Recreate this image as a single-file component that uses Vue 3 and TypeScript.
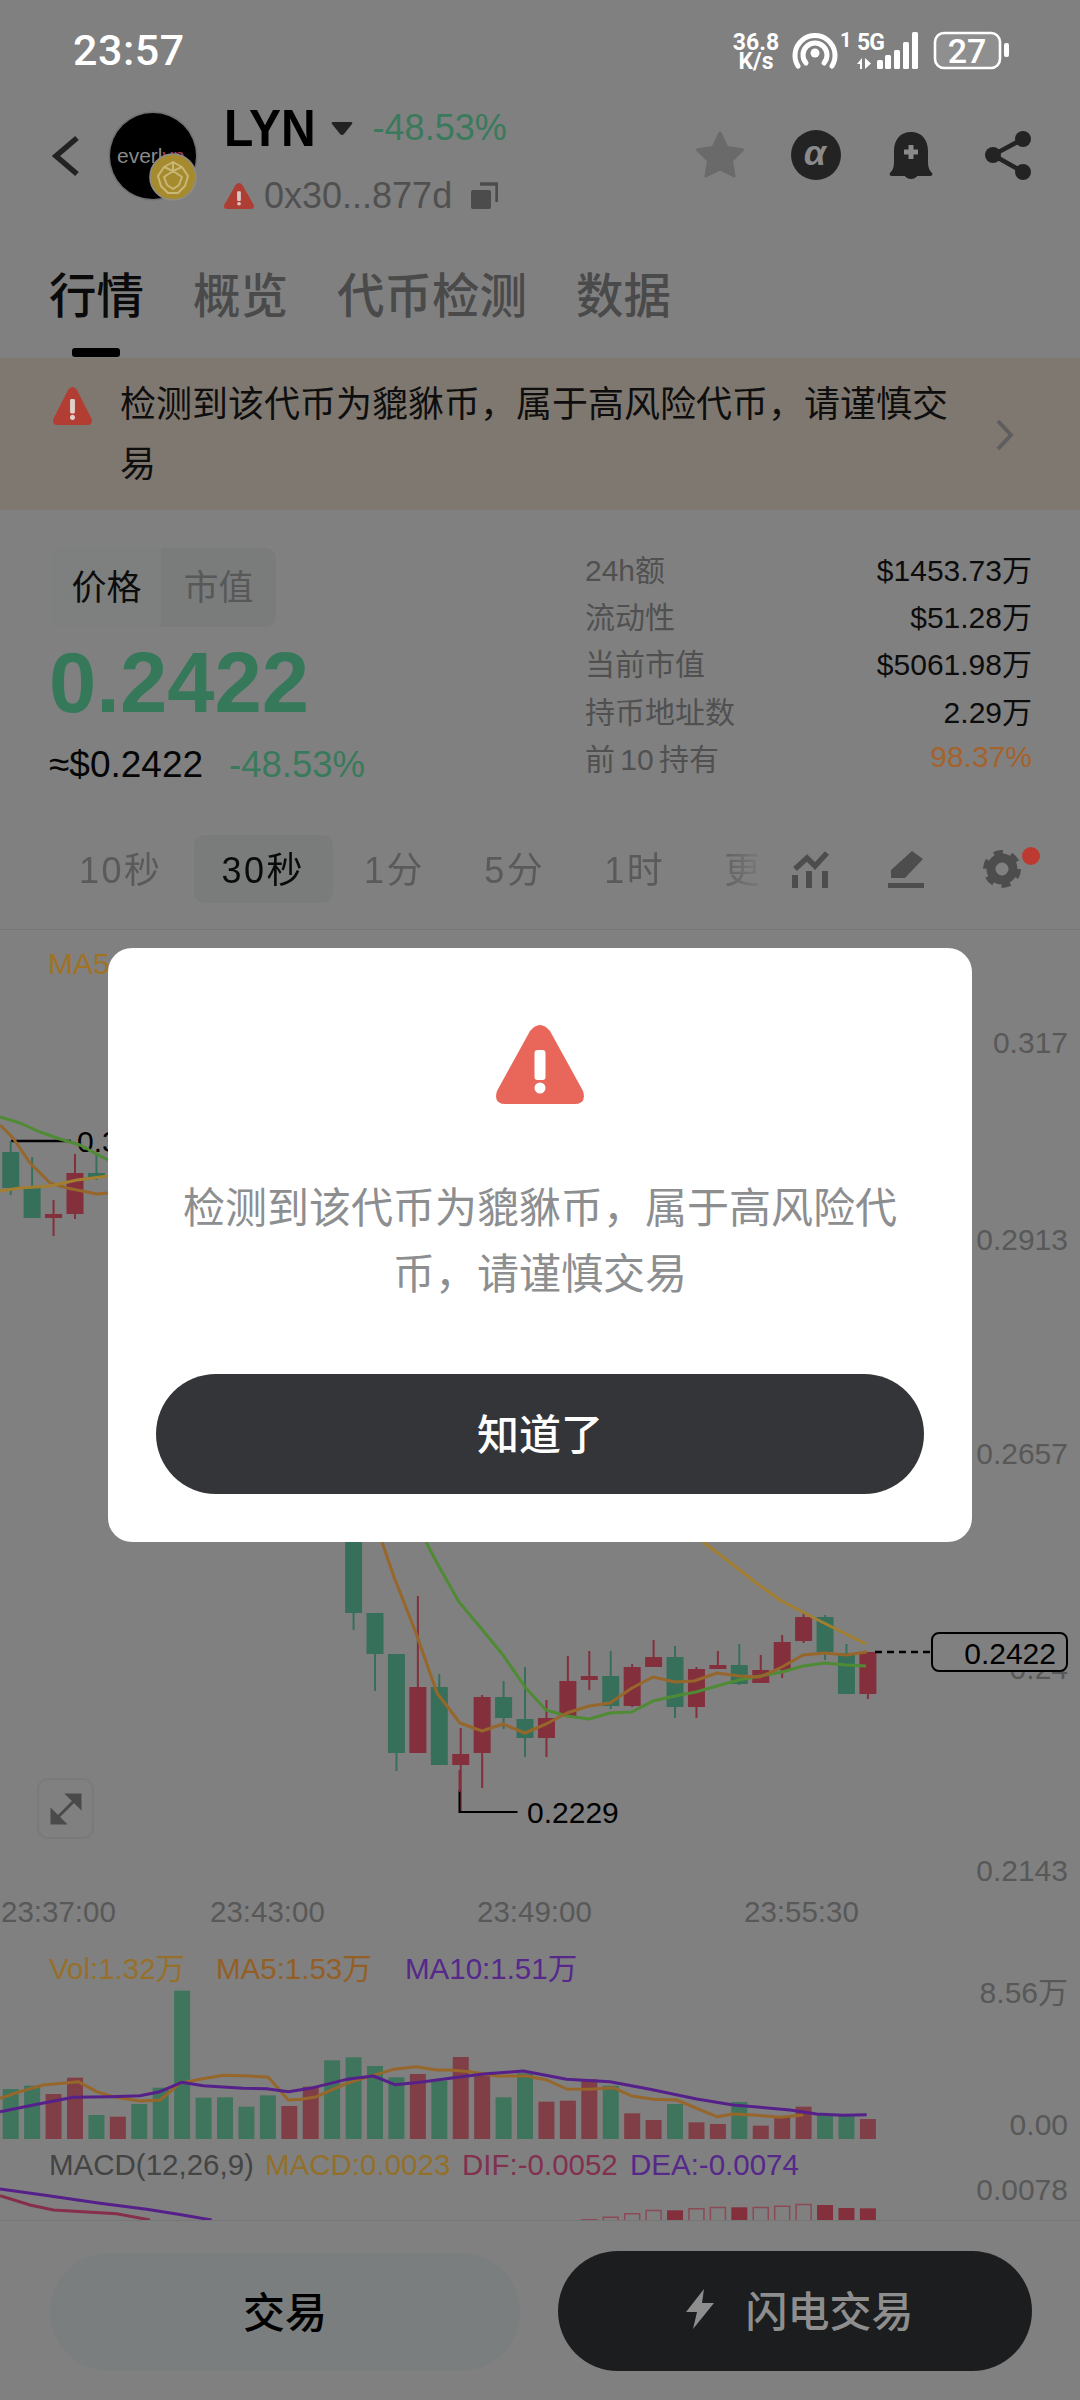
<script setup lang="ts">
type Candle = [number, 'g' | 'r', number, number, number, number]

const barX = (i: number) => 10.7 + 21.43 * i

const candles: Candle[] = [
  [0, 'g', 1152, 1188, 1141, 1195],
  [1, 'g', 1188, 1218, 1157, 1218],
  [2, 'r', 1214, 1218, 1200, 1236],
  [3, 'r', 1173, 1214, 1154, 1219],
  [4, 'g', 1173, 1177, 1155, 1180],
  [16, 'g', 1500, 1613, 1500, 1630],
  [17, 'g', 1613, 1654, 1613, 1691],
  [18, 'g', 1654, 1753, 1654, 1771],
  [19, 'r', 1687, 1753, 1596, 1753],
  [20, 'g', 1687, 1765, 1674, 1765],
  [21, 'r', 1754, 1765, 1728, 1813],
  [22, 'r', 1697, 1753, 1695, 1788],
  [23, 'g', 1697, 1718, 1681, 1729],
  [24, 'g', 1719, 1738, 1667, 1757],
  [25, 'r', 1718, 1738, 1700, 1757],
  [26, 'r', 1681, 1716, 1656, 1716],
  [27, 'r', 1676, 1680, 1651, 1690],
  [28, 'g', 1676, 1706, 1651, 1709],
  [29, 'r', 1667, 1706, 1664, 1707],
  [30, 'r', 1657, 1667, 1640, 1667],
  [31, 'g', 1657, 1707, 1646, 1718],
  [32, 'r', 1669, 1707, 1667, 1718],
  [33, 'r', 1665, 1669, 1651, 1669],
  [34, 'g', 1665, 1684, 1644, 1685],
  [35, 'r', 1670, 1683, 1655, 1683],
  [36, 'r', 1642, 1670, 1635, 1678],
  [37, 'r', 1617, 1641, 1613, 1643],
  [38, 'g', 1617, 1652, 1615, 1660],
  [39, 'g', 1653, 1694, 1644, 1694],
  [40, 'r', 1652, 1694, 1652, 1699],
]

const poly = (p: number[][]) => p.map((q) => q.join(',')).join(' ')
const scaled = (p: number[][], ox: number) =>
  p.map(([x, y]) => `${ox + x / 3},${1990 + y / 3}`).join(' ')

const maLines = [
  { c: '#4f8a34', w: 3, p: [[0, 1117], [20, 1123], [40, 1132], [60, 1139], [80, 1145], [108, 1160], [130, 1170]] },
  { c: '#96662a', w: 3, p: [[0, 1125], [13, 1138], [30, 1163], [50, 1183], [67, 1188], [97, 1194], [120, 1192]] },
  { c: '#a27e30', w: 3, p: [[0, 1191], [20, 1188], [50, 1186], [77, 1180], [108, 1176], [130, 1170]] },
  { c: '#a27e30', w: 3, p: [[703, 1542], [723, 1557], [755, 1582], [780, 1600], [812, 1617], [844, 1633], [866, 1644]] },
  { c: '#4f8a34', w: 3, p: [[426, 1542], [437, 1563], [459, 1602], [480, 1627], [503, 1655], [525, 1687], [546, 1710], [567, 1716], [589, 1719], [610, 1713], [632, 1712], [653, 1701], [675, 1696], [696, 1692], [717, 1686], [739, 1680], [760, 1676], [782, 1672], [803, 1666], [825, 1663], [846, 1665], [866, 1666]] },
  { c: '#96662a', w: 3, p: [[382, 1542], [394, 1577], [416, 1633], [437, 1693], [460, 1723], [482, 1731], [503, 1724], [525, 1733], [546, 1724], [567, 1713], [589, 1706], [610, 1703], [632, 1688], [653, 1677], [675, 1682], [694, 1681], [717, 1673], [739, 1676], [760, 1677], [782, 1667], [803, 1655], [825, 1653], [846, 1655], [867, 1652]] },
]

const volTops: [string, number][] = [
  ['g', 297], ['g', 287], ['r', 312], ['r', 263], ['g', 375], ['r', 380], ['g', 342], ['g', 293], ['g', 2], ['g', 323],
  ['g', 322], ['g', 350], ['g', 316], ['r', 348], ['r', 290], ['g', 211], ['g', 202], ['g', 228], ['g', 262], ['r', 252],
  ['g', 272], ['r', 201], ['r', 255], ['g', 322], ['g', 250], ['r', 335], ['r', 332], ['r', 268], ['g', 287], ['r', 370],
  ['r', 390], ['g', 342], ['r', 397], ['r', 402], ['g', 336], ['r', 407], ['r', 378], ['r', 350], ['g', 375], ['g', 375],
  ['r', 387],
]
const volY = (z: number) => 1990 + z / 3

const volOrange =
  scaled([[0, 325], [60, 305], [130, 285], [235, 275], [290, 305], [340, 320], [420, 333], [480, 330], [540, 280], [600, 268], [670, 256], [750, 258], [805, 262], [865, 330], [905, 328], [950, 320], [1040, 280], [1100, 262], [1180, 238], [1250, 230], [1310, 240], [1350, 240]], 0) +
  ' ' +
  scaled([[60, 245], [140, 258], [230, 258], [290, 270], [350, 297], [420, 298], [490, 293], [545, 318], [610, 328], [680, 330], [800, 380], [850, 372], [920, 376], [990, 382], [1060, 375]], 450)

const volPurple =
  scaled([[0, 365], [100, 345], [220, 322], [330, 320], [420, 317], [480, 305], [545, 277], [610, 287], [730, 295], [800, 296], [865, 305], [940, 293], [1040, 268], [1120, 258], [1185, 284], [1260, 277], [1350, 265]], 0) +
  ' ' +
  scaled([[100, 252], [220, 243], [350, 268], [480, 275], [600, 298], [740, 327], [850, 345], [930, 352], [1020, 360], [1100, 372], [1180, 376], [1250, 374]], 450)

const macdPurple = scaled([[0, 597], [130, 615], [300, 640], [440, 658], [530, 672], [635, 690]], 0)
const macdRed = scaled([[0, 617], [90, 645], [160, 660], [350, 671], [450, 690]], 0)

const macdBars: [number, number, boolean][] = [
  [27, 688, false], [28, 680, false], [29, 670, false], [30, 660, false], [31, 661, true], [32, 655, false], [33, 651, false],
  [34, 652, true], [35, 651, false], [36, 647, false], [37, 642, false], [38, 645, true], [39, 654, true], [40, 655, true],
]

const axis: [string, number][] = [
  ['0.317', 1053], ['0.2913', 1250], ['0.2657', 1464], ['0.24', 1679], ['0.2143', 1881],
  ['8.56万', 2003], ['0.00', 2135], ['0.0078', 2200],
]
const times: [string, number][] = [['23:37:00', 1], ['23:43:00', 210], ['23:49:00', 477], ['23:55:30', 744]]

const volLabels: [string, number, string, number][] = [
  ['Vol:1.32万', 49, '#96702a', 1979], ['MA5:1.53万', 216, '#935f25', 1979], ['MA10:1.51万', 405, '#55288a', 1979],
  ['MACD(12,26,9)', 49, '#444444', 2175], ['MACD:0.0023', 265, '#93702a', 2175], ['DIF:-0.0052', 462, '#823050', 2175], ['DEA:-0.0074', 630, '#55288a', 2175],
]

const stats = [
  { k: '24h额', v: '$1453.73万' },
  { k: '流动性', v: '$51.28万' },
  { k: '当前市值', v: '$5061.98万' },
  { k: '持币地址数', v: '2.29万' },
  { k: '前 10 持有', v: '98.37%', warn: true },
]
const intervals = ['10秒', '30秒', '1分', '5分', '1时', '更多']
const tabs = ['行情', '概览', '代币检测', '数据']
const signal = [[877, 60], [885, 55], [894, 50], [903, 42], [912, 32]]
const warnShape = 'M34 6Q44-6 54 6L87 66Q91 79 78 79H10Q-3 79 1 66Z'
</script>

<template>
  <div class="page">
    <header class="status">
      <span class="clock">23:57</span>
      <svg class="status-icons" width="280" height="56" viewBox="730 22 280 56">
        <text class="st speed" x="756" y="50" text-anchor="middle">36.8</text>
        <text class="st speed" x="756" y="69" text-anchor="middle">K/s</text>
        <path d="M798 66A20 20 0 1 1 832 66" class="arc" />
        <path d="M806 63A12 12 0 1 1 824 63" class="arc" />
        <circle cx="815" cy="53" r="4.5" fill="#fff" />
        <text class="st one" x="840" y="47">1</text>
        <text class="st fiveg" x="857" y="50">5G</text>
        <path d="M857 64l5-6v11h-2v-5zM865 58v11l6-5.5z" fill="#fff" />
        <rect v-for="s in signal" :key="s[0]" :x="s[0]" :y="s[1]" width="6" :height="69 - s[1]" rx="1.5" fill="#fff" />
        <rect x="935" y="33" width="65" height="35" rx="9" class="batt-fill" />
        <rect x="935" y="33" width="65" height="35" rx="9" fill="none" stroke="#fff" stroke-width="2.6" />
        <rect x="1004" y="43" width="5" height="14" rx="2" fill="#fff" />
        <text class="st batt" x="967" y="63" text-anchor="middle">27</text>
      </svg>
    </header>

    <section class="head">
      <svg class="back" width="28" height="42" viewBox="0 0 28 42">
        <path d="M25 3L4 21l21 18" fill="none" stroke="#222" stroke-width="5.5" />
      </svg>
      <div class="avatar">
        <div class="logo"><span class="logo-text">everl<i>yn</i></span></div>
        <svg class="badge" width="48" height="48" viewBox="0 0 48 48">
          <circle cx="24" cy="24" r="23" fill="#a68a2e" stroke="#8c8c8c" stroke-width="1.6" />
          <path d="M24 9l9 5 6 9-3 10-7 7h-10l-7-7-3-10 6-9zM24 9v9M15 14l9 4 9-4M15 24l9-6 9 6-3 8-6 4-6-4z" fill="none" stroke="#c9b778" stroke-width="2" stroke-linejoin="round" />
        </svg>
      </div>
      <div class="info">
        <div class="info-top">
          <span class="sym">LYN</span>
          <svg width="22" height="15" viewBox="0 0 22 15" class="caret"><path d="M2 1h18q2 0 1 2l-8 10q-2 2-4 0L1 3Q0 1 2 1z" fill="#222" /></svg>
          <span class="chg">-48.53%</span>
        </div>
        <div class="info-addr">
          <svg width="30" height="26" viewBox="0 0 88 79" preserveAspectRatio="none">
            <path :d="warnShape" fill="#ae3d33" />
            <rect x="38.5" y="25" width="11" height="30" rx="3" fill="#d8c8c4" />
            <circle cx="44" cy="63" r="5.5" fill="#d8c8c4" />
          </svg>
          <span class="addr">0x30...877d</span>
          <svg width="28" height="28" viewBox="0 0 28 28">
            <path d="M10 2h17v18" fill="none" stroke="#4c4c4c" stroke-width="3.4" />
            <rect x="1" y="8" width="20" height="19" rx="2" fill="#4c4c4c" />
          </svg>
        </div>
      </div>
      <svg class="actions" width="345" height="60" viewBox="690 125 345 60">
        <path d="M720 133l7 14.5 15.5 2.2-11 11 2.6 15.3-14.1-7.2-14.1 7.2 2.6-15.3-11-11 15.5-2.2z" fill="#6a6a6a" stroke="#6a6a6a" stroke-width="3" stroke-linejoin="round" />
        <circle cx="816" cy="155" r="25" fill="#232323" />
        <text class="alpha" x="815" y="165" text-anchor="middle">α</text>
        <path d="M911 132c-11 0-17 8-17 19v11c0 5-1 8-4 11-1 2 0 3 2 3h38c2 0 3-1 2-3-3-3-4-6-4-11v-11c0-11-6-19-17-19z" fill="#232323" />
        <path d="M903 171a8 8 0 0 0 16 0z" fill="#232323" />
        <path d="M904 152h14M911 145v14" stroke="#8a8a8a" stroke-width="5" />
        <path d="M1023 139l-30 16 30 17" fill="none" stroke="#232323" stroke-width="4.5" />
        <circle cx="1023" cy="139" r="8" fill="#232323" />
        <circle cx="993" cy="155" r="8" fill="#232323" />
        <circle cx="1023" cy="172" r="8" fill="#232323" />
      </svg>
    </section>

    <nav class="tabs">
      <span v-for="(t, i) in tabs" :key="t" class="tab" :class="{ on: i === 0 }">{{ t }}</span>
    </nav>

    <section class="banner">
      <svg class="banner-warn" width="39" height="38" viewBox="0 0 88 79" preserveAspectRatio="none">
        <path :d="warnShape" fill="#b23d33" />
        <rect x="38.5" y="25" width="11" height="30" rx="3" fill="#e0d0cc" />
        <circle cx="44" cy="63" r="5.5" fill="#e0d0cc" />
      </svg>
      <p class="banner-text">检测到该代币为貔貅币，属于高风险代币，请谨慎交易</p>
      <svg class="banner-arrow" width="18" height="32" viewBox="0 0 18 32">
        <path d="M2 2l13 14L2 30" fill="none" stroke="#5e5e5e" stroke-width="4" />
      </svg>
    </section>

    <section class="market">
      <div class="market-left">
        <div class="seg">
          <span class="seg-item seg-on">价格</span>
          <span class="seg-item">市值</span>
        </div>
        <div class="price">0.2422</div>
        <div class="sub"><span class="usd">≈$0.2422</span><span class="chg sub-chg">-48.53%</span></div>
      </div>
      <dl class="stats">
        <div v-for="s in stats" :key="s.k" class="stat">
          <dt>{{ s.k }}</dt>
          <dd :class="{ warn: s.warn }">{{ s.v }}</dd>
        </div>
      </dl>
    </section>

    <section class="periods">
      <div class="period-list">
        <span v-for="(p, i) in intervals" :key="p" class="period" :class="{ on: i === 1 }">{{ p }}</span>
      </div>
      <svg width="280" height="68" viewBox="770 835 280 68">
        <path d="M795 869l12-11 8 8 12-13" fill="none" stroke="#4d4d4d" stroke-width="5.5" />
        <path d="M795 875v13M809 871v17M825 871v17" stroke="#4d4d4d" stroke-width="6" />
        <path d="M912 851l11 8-18 19h-14v-8zM888 883h36v5h-36z" fill="#4d4d4d" />
        <circle cx="1002" cy="869" r="11" fill="none" stroke="#4d4d4d" stroke-width="9" />
        <circle cx="1002" cy="869" r="16.5" fill="none" stroke="#4d4d4d" stroke-width="5" stroke-dasharray="9 8.28" />
        <circle cx="1031" cy="856" r="9" fill="#bd3a30" />
      </svg>
    </section>

    <svg class="chart" width="1080" height="1291" viewBox="0 929 1080 1291">
      <text class="ct" x="48" y="974" fill="#a07225">MA5:0.2437</text>
      <path d="M11 1141h60" stroke="#000" stroke-width="2.5" />
      <text class="ct" x="77" y="1152" fill="#000">0.3361</text>

      <text v-for="a in axis" :key="a[0]" class="ct" x="1068" :y="a[1]" text-anchor="end" fill="#585858">{{ a[0] }}</text>
      <text v-for="t in times" :key="t[0]" class="ct time" :x="t[1]" y="1922" fill="#585858">{{ t[0] }}</text>

      <g v-for="c in candles" :key="c[0]" :fill="c[1] === 'g' ? '#37705a' : '#842f3c'">
        <rect :x="barX(c[0]) - 1" :y="c[4]" width="2" :height="c[5] - c[4]" />
        <rect :x="barX(c[0]) - 8.5" :y="c[2]" width="17" :height="c[3] - c[2]" />
      </g>
      <polyline v-for="(l, i) in maLines" :key="i" :points="poly(l.p)" fill="none" :stroke="l.c" :stroke-width="l.w" stroke-linejoin="round" />

      <path d="M459.5 1790v22h58" fill="none" stroke="#000" stroke-width="2" />
      <path d="M459.5 1770v22" stroke="#842f3c" stroke-width="2" />
      <text class="ct" x="527" y="1823" fill="#000">0.2229</text>

      <path d="M875 1652h55" stroke="#000" stroke-width="2.5" stroke-dasharray="7 5" />
      <rect x="932" y="1633" width="135" height="38" rx="7" fill="#808080" stroke="#000" stroke-width="2" />
      <text class="ct" x="1056" y="1664" text-anchor="end" fill="#000">0.2422</text>

      <rect x="38" y="1779" width="55" height="59" rx="10" fill="none" stroke="#7a7a7a" stroke-width="2" />
      <path d="M68 1795h12v12zM52 1811v12h12zM58 1817l16-16" fill="#4a4a4a" stroke="#4a4a4a" stroke-width="3" />

      <text v-for="v in volLabels" :key="v[0]" class="ct small" :x="v[1]" :y="v[3]" :fill="v[2]">{{ v[0] }}</text>

      <rect v-for="(b, i) in volTops" :key="i" :x="barX(i) - 8" :y="volY(b[1])" width="16" :height="2139 - volY(b[1])" :fill="b[0] === 'g' ? '#3f755c' : '#803f46'" />
      <polyline :points="volOrange" fill="none" stroke="#96662a" stroke-width="3" stroke-linejoin="round" />
      <polyline :points="volPurple" fill="none" stroke="#55208a" stroke-width="3" stroke-linejoin="round" />

      <polyline :points="macdRed" fill="none" stroke="#862f4a" stroke-width="3" />
      <polyline :points="macdPurple" fill="none" stroke="#55208a" stroke-width="3" />
      <template v-for="m in macdBars" :key="m[0]">
        <rect v-if="m[2]" :x="barX(m[0]) - 8" :y="volY(m[1])" width="16" :height="2220 - volY(m[1])" fill="#842f3c" />
        <path v-else :d="`M${barX(m[0]) - 7.5} 2220V${volY(m[1]) + 0.5}H${barX(m[0]) + 7.5}V2220`" fill="none" stroke="#8c4a54" stroke-width="1.5" />
      </template>
    </svg>

    <footer class="foot">
      <button class="btn btn-plain">交易</button>
      <button class="btn btn-dark">
        <svg width="30" height="40" viewBox="0 0 30 40"><path d="M19 0L1 23h11L8 40l21-26H17z" fill="#8e8e8e" /></svg>
        <span>闪电交易</span>
      </button>
    </footer>

    <div class="dialog-layer">
      <div class="dialog">
        <svg width="88" height="79" viewBox="0 0 88 79">
          <path :d="warnShape" fill="#e8675a" />
          <rect x="38.5" y="25" width="11" height="30" rx="3" fill="#fff" />
          <circle cx="44" cy="63" r="5.5" fill="#fff" />
        </svg>
        <p class="dialog-text">检测到该代币为貔貅币，属于高风险代币，请谨慎交易</p>
        <button class="dialog-btn">知道了</button>
      </div>
    </div>
  </div>
</template>

<style>
html, body { margin: 0; background: #808080; }
</style>

<style scoped>
.page {
  position: relative;
  width: 1080px;
  height: 2400px;
  overflow: hidden;
  background: #808080;
  color: #000;
  font-family: "Liberation Sans", "Noto Sans CJK SC", sans-serif;
}
svg { display: block; flex: none; }

.status {
  height: 100px;
  display: flex;
  justify-content: space-between;
  align-items: center;
  padding: 0 70px 0 73px;
}
.clock { font: 500 43px Roboto, sans-serif; color: #fff; letter-spacing: 0.5px; }
.st { fill: #fff; font-family: Roboto, sans-serif; font-weight: 700; }
.speed { font-size: 23px; }
.one { font-size: 20px; }
.fiveg { font-size: 23px; letter-spacing: -1px; }
.batt { font-size: 34px; font-weight: 500; }
.batt-fill { fill: rgba(255,255,255,.12); }
.arc { fill: none; stroke: #fff; stroke-width: 5px; stroke-linecap: round; }

.head { height: 122px; display: flex; align-items: flex-start; padding-left: 52px; position: relative; }
.back { margin-top: 35px; }
.avatar { position: relative; width: 90px; height: 90px; margin: 11px 0 0 28px; }
.logo {
  width: 86px; height: 86px; margin: 2px;
  border-radius: 50%;
  background: #000;
  box-shadow: 0 0 0 1.5px #707070;
  overflow: hidden;
  display: flex; align-items: center;
}
.logo-text { font-size: 21px; color: #8a8a8a; padding-left: 7px; white-space: nowrap; }
.logo-text i { font-style: normal; color: #a0405a; }
.badge { position: absolute; left: 41px; top: 42px; }
.info { margin-left: 26px; }
.info-top { height: 56px; display: flex; align-items: center; }
.sym { display: inline-block; font-size: 48px; font-weight: 700; line-height: 56px; margin-top: 2px; transform: scaleY(1.07); }
.caret { margin: 0 20px 0 15px; }
.chg { color: #3a7a5c; font-size: 36px; letter-spacing: 0; }
.info-addr { margin-top: 14px; height: 52px; display: flex; align-items: center; }
.addr { font-size: 36px; color: #505050; margin: 0 18px 0 10px; }
.actions { position: absolute; left: 690px; top: 25px; }

.tabs { height: 136px; box-sizing: border-box; padding: 51px 0 0 49px; display: flex; gap: 49px; position: relative; }
.tab { position: relative; height: 48px; line-height: 48px; font-size: 47.5px; font-weight: 500; color: #4a4a4a; }
.tab.on { color: #0a0a0a; }
.tab.on::after {
  content: "";
  position: absolute;
  left: 23px; top: 75px;
  width: 48px; height: 9px;
  border-radius: 3px;
  background: #000;
}

.banner {
  height: 152px;
  box-sizing: border-box;
  background: #7f7870;
  padding: 17px 0 0 53px;
  display: flex;
  align-items: flex-start;
}
.banner-warn { margin-top: 12px; }
.banner-text { margin: 0 0 0 28px; width: 850px; font-size: 36px; line-height: 60px; color: #0e0e0e; }
.banner-arrow { margin: 44px 0 0 26px; }

.market { height: 315px; box-sizing: border-box; padding: 34px 48px 0 49px; display: flex; justify-content: space-between; }
.seg { display: flex; width: 224px; height: 79px; margin: 4px 0 0 3px; border-radius: 10px; overflow: hidden; background: #7a7c7c; }
.seg-item { flex: 1; text-align: center; line-height: 79px; font-size: 35px; color: #585858; }
.seg-on { flex: 0 0 109px; background: #7e7f7f; color: #0c0c0c; }
.price { font-size: 85px; font-weight: 700; line-height: 84px; color: #35785a; margin-top: 14px; }
.sub { margin-top: 18px; line-height: 44px; display: flex; gap: 26px; font-size: 37px; }
.usd { color: #050505; }
.sub-chg { font-size: 36.5px; }
.stats { margin: 0; width: 447px; }
.stat { height: 47.3px; display: flex; justify-content: space-between; align-items: center; font-size: 30px; }
.stat dt { color: #505050; word-spacing: -3px; }
.stat dd { margin: 0; color: #0c0c0c; }
.stat dd.warn { color: #a5622c; }

.periods { height: 104px; box-sizing: border-box; padding: 10px 0 0 51px; display: flex; align-items: flex-start; }
.period-list {
  width: 719px;
  display: flex;
  gap: 3px;
  overflow: hidden;
  -webkit-mask-image: linear-gradient(90deg, #000 92%, transparent 100%);
  mask-image: linear-gradient(90deg, #000 92%, transparent 100%);
}
.period { flex: none; height: 68px; line-height: 72px; padding: 0 28px; border-radius: 10px; font-size: 36px; color: #5a5a5a; letter-spacing: 2.5px; }
.period.on { background: #7a7c7c; color: #0a0a0a; }

.chart { background: linear-gradient(#777 1px, transparent 1px); }
.ct { font-size: 30px; font-family: "Liberation Sans", "Noto Sans CJK SC", sans-serif; }
.time { font-size: 29.5px; }
.small { font-size: 29.5px; }
.alpha { fill: #8a8a8a; font: italic 700 36px "Liberation Sans", sans-serif; }

.foot {
  height: 180px;
  box-sizing: border-box;
  border-top: 1.5px solid #767676;
  padding: 30px 48px 0 50px;
  display: flex;
  align-items: flex-start;
  gap: 38px;
}
.btn { border: 0; padding: 0 0 5px; font: 500 42px "Liberation Sans", "Noto Sans CJK SC", sans-serif; border-radius: 60px; display: flex; align-items: center; justify-content: center; }
.btn-plain { width: 470px; height: 118px; margin-top: 2px; background: #7b7e7e; color: #000; }
.btn-dark { width: 474px; height: 120px; padding-left: 9px; background: #1b1d1f; color: #8e8e8e; gap: 30px; }

.dialog-layer { position: absolute; left: 0; right: 0; top: 0; padding-top: 948px; display: flex; justify-content: center; }
.dialog {
  width: 864px; height: 594px;
  box-sizing: border-box;
  padding-top: 77px;
  background: #fff;
  border-radius: 24px;
  display: flex;
  flex-direction: column;
  align-items: center;
}
.dialog-text { margin: 72px 0 0; width: 740px; text-align: center; font-size: 42px; line-height: 66px; color: #8c8e90; }
.dialog-btn {
  margin-top: 66px;
  width: 768px; height: 120px;
  flex: none;
  border: 0; border-radius: 60px;
  padding: 0 0 5px;
  background: #333538;
  color: #fff;
  font: 500 42px "Liberation Sans", "Noto Sans CJK SC", sans-serif;
}
</style>
